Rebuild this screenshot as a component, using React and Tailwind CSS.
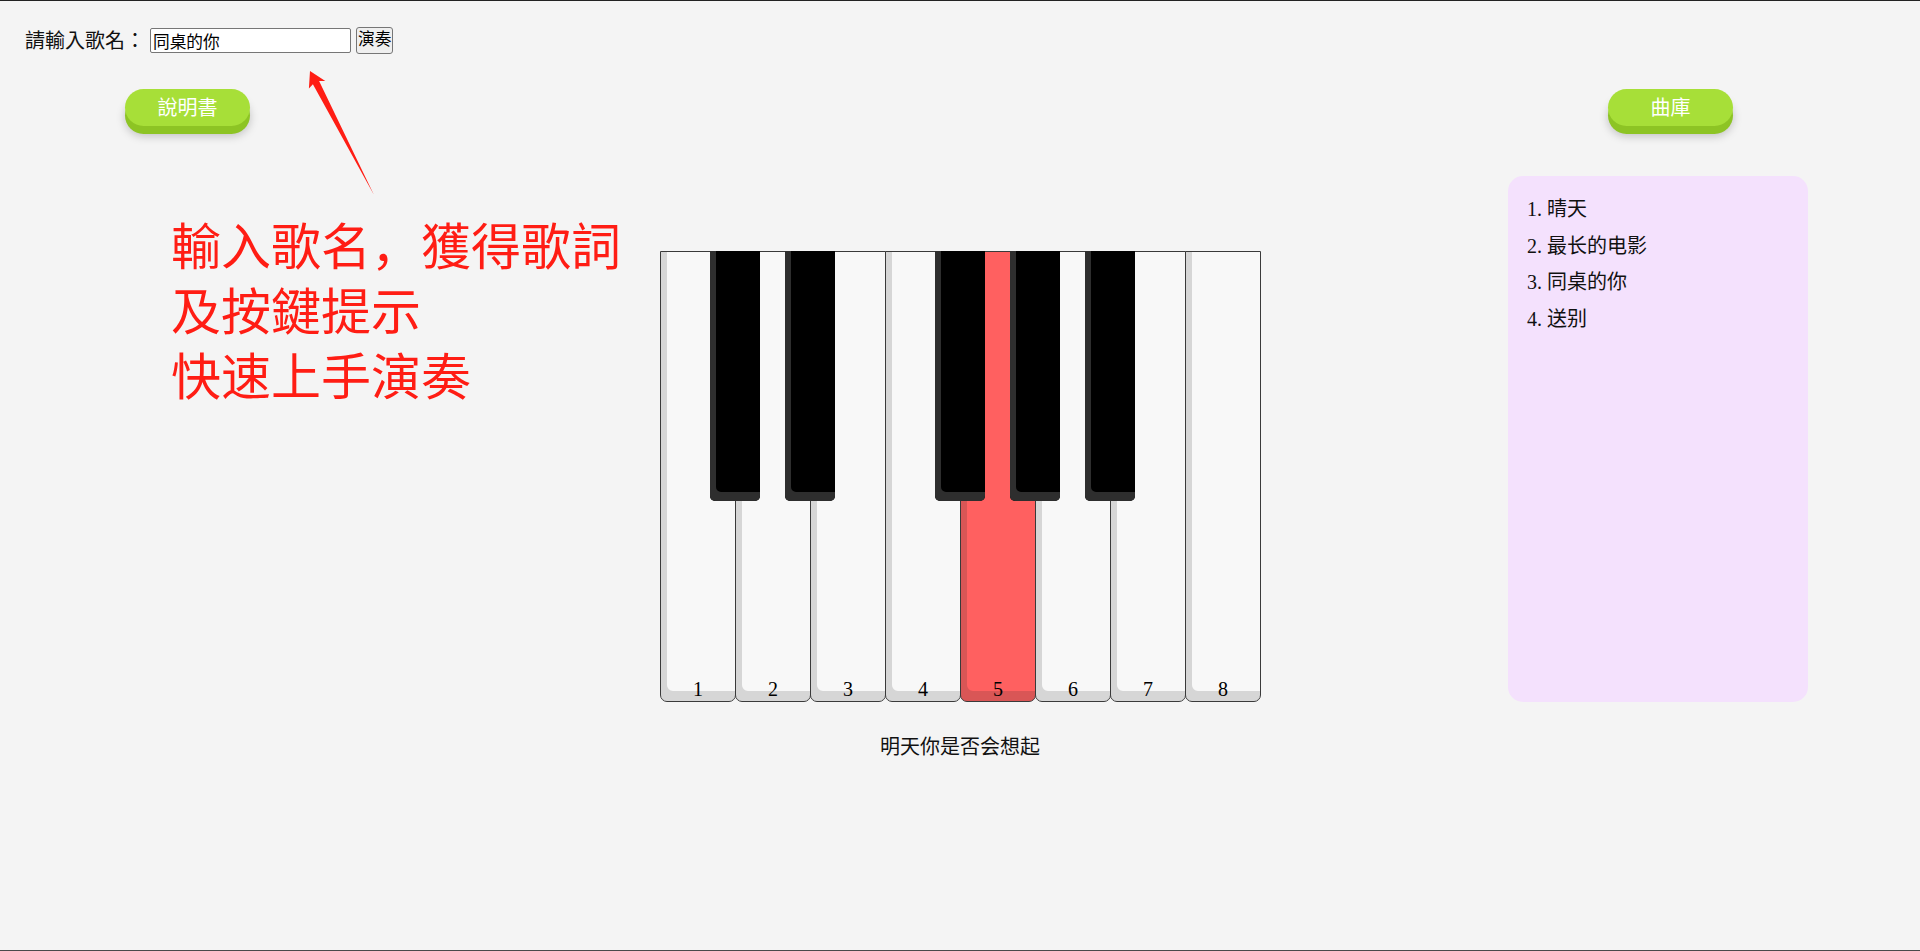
import { useState } from 'react'

const songs = ['晴天', '最长的电影', '同桌的你', '送别']

// black keys sit over the white key seams (offsets from piano left)
const blackKeys = ['left-[50px]', 'left-[125px]', 'left-[275px]', 'left-[350px]', 'left-[425px]']

function GreenButton({ children, className }) {
  return (
    <button
      className={
        'h-[37px] w-[125px] rounded-full bg-[#a7df38] text-[20px] leading-none text-white shadow-[0_8px_0_#8dc424,0_10px_10px_rgba(0,0,0,0.22)] ' +
        (className || '')
      }
    >
      {children}
    </button>
  )
}

function Piano({ active }) {
  return (
    <div className="relative flex h-[451px] w-[600px]">
      {[1, 2, 3, 4, 5, 6, 7, 8].map(n => (
        <div
          key={n}
          className={
            'flex h-full w-[76px] shrink-0 flex-col items-center justify-end rounded-b-[7px] border border-[#3a3a3a] text-[20px] leading-[23px] text-black ' +
            (n > 1 ? '-ml-px ' : '') +
            (n === active
              ? 'bg-[#ff6060] shadow-[inset_6px_-10px_0_#d95656]'
              : 'bg-[#f8f8f8] shadow-[inset_6px_-10px_0_#d6d6d6]')
          }
        >
          {n}
        </div>
      ))}
      {blackKeys.map(pos => (
        <div
          key={pos}
          className={
            'absolute top-0 h-[250px] w-[50px] rounded-b-[5px] bg-black shadow-[inset_6px_-9px_0_#2e2e2e] ' + pos
          }
        />
      ))}
    </div>
  )
}

export default function App() {
  const [song, setSong] = useState('同桌的你')

  return (
    <div className="relative h-[951px] w-full overflow-hidden border-t border-b border-t-[#222] border-b-[#4a4a4a] bg-[#f4f4f4] font-['Liberation_Serif','Noto_Sans_CJK_SC',serif] text-[#111]">
      {/* search bar */}
      <div className="flex h-[27px] items-center gap-[5px] pl-[25px] mt-[26px]">
        <span className="font-['Liberation_Serif','Noto_Sans_CJK_TC',serif] text-[20px]">請輸入歌名：</span>
        <input
          value={song}
          onChange={e => setSong(e.target.value)}
          className="h-[25px] w-[201px] rounded-[2px] border border-[#767676] bg-white px-[2px] font-['Liberation_Sans','Noto_Sans_CJK_SC',sans-serif] text-[16.7px] leading-none text-black outline-none"
        />
        <button className="h-[27px] rounded-[3px] border border-[#767676] bg-[#efefef] px-px font-['Liberation_Sans','Noto_Sans_CJK_SC',sans-serif] text-[16.7px] leading-none text-black">
          演奏
        </button>
      </div>

      <div className="mt-[35px] flex">
        {/* left: manual + hint */}
        <div className="w-[660px] shrink-0">
          <GreenButton className="ml-[125px]">說明書</GreenButton>
          <div className="ml-[171px] mt-[90px] text-[50px] leading-[65px] text-[#ff1d14]">
            <div>輸入歌名，獲得歌詞</div>
            <div>及按鍵提示</div>
            <div>快速上手演奏</div>
          </div>
        </div>

        {/* center: piano */}
        <div className="w-[600px] shrink-0">
          <div className="mt-[162px]">
            <Piano active={5} />
          </div>
          <div className="mt-[32px] text-center text-[20px] leading-[26px]">明天你是否会想起</div>
        </div>

        {/* right: song list */}
        <div className="ml-[248px] w-[300px] shrink-0">
          <GreenButton className="ml-[100px]">曲庫</GreenButton>
          <div className="mt-[50px] h-[526px] rounded-[15px] bg-[#f4e1fd] pl-[19px] pt-[15px]">
            {songs.map((s, i) => (
              <div key={s} className="text-[20px] leading-[36.7px]">
                {i + 1}. {s}
              </div>
            ))}
          </div>
        </div>
      </div>

      {/* annotation arrow */}
      <svg className="absolute left-[300px] top-[60px] h-[150px] w-[90px]" viewBox="300 60 90 150">
        <polygon
          points="310,70 325.3,80.1 319.1,79.9 374,194 312.9,83.2 308.9,87.4"
          fill="#ff1d14"
        />
      </svg>
    </div>
  )
}
